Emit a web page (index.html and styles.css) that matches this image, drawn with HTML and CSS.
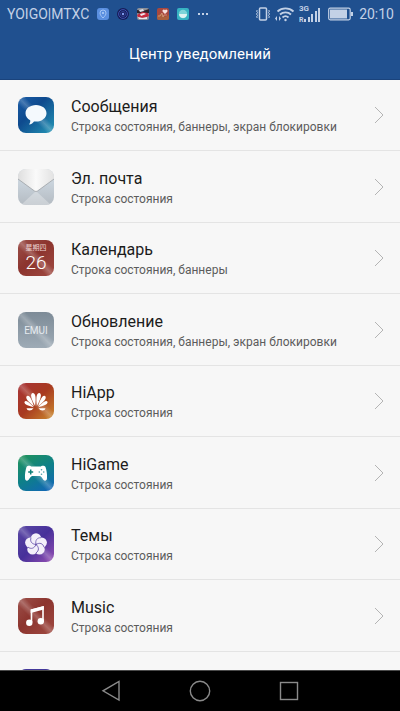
FILE: index.html
```html
<!DOCTYPE html>
<html lang="ru">

<head>
    <meta charset="UTF-8">
    <meta name="viewport" content="width=device-width, initial-scale=1.0">
    <title>Центр уведомлений</title>
    <link rel="stylesheet" href="styles.css">
</head>

<body>
    <header class="top">
        <div class="status">
            <span class="carrier">YOIGO|MTXC</span>
            <div class="tray">
                <svg width="12" height="12" viewBox="0 0 12 12">
                    <rect width="12" height="12" rx="3" fill="#5a8fe0"/>
                    <path d="M6 10C4 8 3 6.500 3 5a3 3 0 0 1 6 0c0 1.500-1 3-3 5z" fill="none" stroke="#b5d2fa" stroke-width=".8"/>
                    <circle cx="6" cy="5" r="1" fill="#b5d2fa"/>
                </svg>
                <svg width="12" height="12" viewBox="0 0 12 12">
                    <circle cx="6" cy="6" r="6" fill="#161c58"/>
                    <circle cx="6" cy="6" r="4.400" fill="none" stroke="#4258b8" stroke-width=".9"/>
                    <circle cx="6" cy="6" r="2.600" fill="none" stroke="#3446a0" stroke-width=".8"/>
                    <circle cx="6" cy="6" r="1.200" fill="#7f9cf0"/>
                </svg>
                <svg width="12" height="12" viewBox="0 0 12 12">
                    <rect width="12" height="12" rx="2" fill="#8c8f98"/>
                    <path d="M0 2l6 1 6-2v4L6 6 0 5z" fill="#30242c"/>
                    <path d="M2 2l4-1 1 2-4 1z" fill="#dfe2e8"/>
                    <path d="M0 7l5-3 6 1 1 3-5 2-6-1z" fill="#c8283c"/>
                    <path d="M3 6l4-1 2 1-5 2zM1 9l4 1 5-1v2H2z" fill="#eee8ec"/>
                </svg>
                <svg width="12" height="12" viewBox="0 0 12 12">
                    <rect width="12" height="12" rx="2" fill="#a8483e"/>
                    <path d="M0 8l5-3 3 4 4-2v3a2 2 0 0 1-2 2H2a2 2 0 0 1-2-2z" fill="#a9603c"/>
                    <path d="M1 8h2l2-3 1 4 1-2h3" fill="none" stroke="#e0a486" stroke-width=".7"/>
                    <path d="M8 6L5.700 3.700a1.200 1.200 0 0 1 2.300-1.400 1.200 1.200 0 0 1 2.300 1.400z" fill="#f6dfdc"/>
                </svg>
                <svg width="12" height="12" viewBox="0 0 12 12">
                    <rect width="12" height="12" rx="2" fill="#36b3c2"/>
                    <circle cx="6" cy="6" r="4.200" fill="#7ed4d8"/>
                    <path d="M2 6h8c0 2.500-2 4-4 4S2 8.500 2 6z" fill="#dff4f2"/>
                </svg>
                <svg width="12" height="12" viewBox="0 0 12 12" fill="#c3d1e6">
                    <rect x="1" y="5" width="2" height="2"/>
                    <rect x="5" y="5" width="2" height="2"/>
                    <rect x="9" y="5" width="2" height="2"/>
                </svg>
            </div>
            <div class="signals">
                <svg width="16" height="14" viewBox="0 0 16 14" fill="none" stroke="#c3d1e6">
                    <rect x="4.500" y="1" width="7" height="12" rx="1" stroke-width="1.500"/>
                    <path d="M2.500 3l-1 1 1 1.500-1 1.500 1 1.500-1 1.500 1 1M13.500 3l1 1-1 1.500 1 1.500-1 1.500 1 1.500-1 1"/>
                </svg>
                <svg width="20" height="16" viewBox="0 0 20 16" fill="none" stroke="#c3d1e6" stroke-width="1.800">
                    <path d="M2.500 5.500a12 12 0 0 1 16 0M5 8.500a8 8 0 0 1 11 0M7.500 11.500a4.500 4.500 0 0 1 6 0"/>
                    <circle cx="10.500" cy="14" r="1.200" fill="#c3d1e6" stroke="none"/>
                    <path d="M0 12.500L2 10v5zM6 12.500L4 10v5z" fill="#c3d1e6" stroke="none"/>
                </svg>
                <svg class="cell" width="22" height="18" viewBox="0 0 22 18" fill="#c3d1e6">
                    <text x="0" y="6" font-size="8">3G</text>
                    <text x="0" y="17" font-size="7">R</text>
                    <rect x="5" y="14" width="2" height="3"/>
                    <rect x="9" y="12" width="2" height="5"/>
                    <rect x="12" y="9" width="2" height="8"/>
                    <rect x="16" y="6" width="2" height="11"/>
                    <rect x="19" y="3" width="2" height="14"/>
                </svg>
                <svg class="battery" width="25" height="14" viewBox="0 0 25 14">
                    <rect x=".7" y="1.200" width="21.500" height="11.600" rx="1.500" fill="none" stroke="#c3d1e6" stroke-width="1.200"/>
                    <rect x="2" y="2.500" width="17" height="9" fill="#c3d1e6"/>
                    <path d="M23 5h2v4h-2z" fill="#c3d1e6"/>
                </svg>
                <span class="time">20:10</span>
            </div>
        </div>
        <h1>Центр уведомлений</h1>
    </header>

    <main class="list">
        <a class="row" href="#">
            <svg class="icon" viewBox="0 0 36 36">
                <defs>
                    <linearGradient id="blue" x1="0" y1="0" x2="1" y2="1">
                        <stop offset="0" stop-color="#1a5ca6"/>
                        <stop offset=".4" stop-color="#0e4a8e"/>
                        <stop offset="1" stop-color="#2496b6"/>
                    </linearGradient>
                    <linearGradient id="shine" x1="0" y1="1" x2="1" y2="0">
                        <stop offset=".4" stop-color="#fff" stop-opacity="0"/>
                        <stop offset=".5" stop-color="#fff" stop-opacity=".22"/>
                        <stop offset=".6" stop-color="#fff" stop-opacity="0"/>
                    </linearGradient>
                </defs>
                <rect width="36" height="36" rx="8" fill="url(#blue)"/>
                <rect width="36" height="36" rx="8" fill="url(#shine)"/>
                <path d="M18 8c6 0 10.500 3.600 10.500 8.200S24 24.500 18 24.500l-2-.1c-1 1.500-2.500 2.700-5 3.100 1-1.200 1.400-2.600 1.200-4.200C9.300 21.800 7.500 19.200 7.500 16.200 7.500 11.600 12 8 18 8z" fill="#f4f9fd"/>
            </svg>
            <span class="info">
                <span class="name">Сообщения</span>
                <span class="desc">Строка состояния, баннеры, экран блокировки</span>
            </span>
            <svg class="arrow" viewBox="0 0 10 18"><path d="M1 1l8 8-8 8"/></svg>
        </a>
        <a class="row" href="#">
            <svg class="icon" viewBox="0 0 36 36">
                <defs>
                    <linearGradient id="paper" x1="0" y1="0" x2="0" y2="1">
                        <stop offset=".3" stop-color="#ccd6df"/>
                        <stop offset="1" stop-color="#b4bbc2"/>
                    </linearGradient>
                    <linearGradient id="flap" x1="0" y1="0" x2="1" y2="0">
                        <stop offset="0" stop-color="#dedede"/>
                        <stop offset=".5" stop-color="#fafafa"/>
                        <stop offset="1" stop-color="#e2e2e2"/>
                    </linearGradient>
                </defs>
                <rect width="36" height="36" rx="8" fill="url(#paper)"/>
                <path d="M4 35l14-13 14 13-4 1H8z" fill="#fff" opacity=".3"/>
                <path d="M0 10V8a8 8 0 0 1 8-8h20a8 8 0 0 1 8 8v2L19.500 22q-1.500 1-3 0z" fill="url(#flap)"/>
                <path d="M0 10l16.500 12q1.500 1 3 0L36 10" fill="none" stroke="#9da2a6" stroke-width=".8"/>
            </svg>
            <span class="info">
                <span class="name">Эл. почта</span>
                <span class="desc">Строка состояния</span>
            </span>
            <svg class="arrow" viewBox="0 0 10 18"><path d="M1 1l8 8-8 8"/></svg>
        </a>
        <a class="row" href="#">
            <svg class="icon" viewBox="0 0 36 36">
                <defs>
                    <linearGradient id="brick" x1="0" y1="0" x2="1" y2="1">
                        <stop offset="0" stop-color="#9c504a"/>
                        <stop offset=".45" stop-color="#8c342e"/>
                        <stop offset="1" stop-color="#a04a42"/>
                    </linearGradient>
                </defs>
                <rect width="36" height="36" rx="8" fill="url(#brick)"/>
                <rect width="36" height="36" rx="8" fill="url(#shine)"/>
                <text class="weekday" x="18" y="10" text-anchor="middle">星期四</text>
                <text class="day" x="18" y="29" text-anchor="middle">26</text>
            </svg>
            <span class="info">
                <span class="name">Календарь</span>
                <span class="desc">Строка состояния, баннеры</span>
            </span>
            <svg class="arrow" viewBox="0 0 10 18"><path d="M1 1l8 8-8 8"/></svg>
        </a>
        <a class="row" href="#">
            <svg class="icon" viewBox="0 0 36 36">
                <defs>
                    <linearGradient id="steel" x1="0" y1="0" x2="0" y2="1">
                        <stop offset="0" stop-color="#7d8b97"/>
                        <stop offset="1" stop-color="#9eabb6"/>
                    </linearGradient>
                </defs>
                <rect width="36" height="36" rx="8" fill="url(#steel)"/>
                <rect width="36" height="36" rx="8" fill="url(#shine)"/>
                <text class="emui" x="18" y="22" text-anchor="middle">EMUI</text>
            </svg>
            <span class="info">
                <span class="name">Обновление</span>
                <span class="desc">Строка состояния, баннеры, экран блокировки</span>
            </span>
            <svg class="arrow" viewBox="0 0 10 18"><path d="M1 1l8 8-8 8"/></svg>
        </a>
        <a class="row" href="#">
            <svg class="icon" viewBox="0 0 36 36">
                <defs>
                    <linearGradient id="fire" x1="0" y1="0" x2="1" y2="1">
                        <stop offset="0" stop-color="#a83438"/>
                        <stop offset=".5" stop-color="#a83a20"/>
                        <stop offset="1" stop-color="#cc8a2e"/>
                    </linearGradient>
                    <path id="petal" d="M0-2C-1.200-6-2.400-10-2-13q.5-2.200 2-2.200T2-13C2.400-10 1.200-6 0-2z"/>
                </defs>
                <rect width="36" height="36" rx="8" fill="url(#fire)"/>
                <rect width="36" height="36" rx="8" fill="url(#shine)"/>
                <g fill="#fff" transform="translate(18 25)">
                    <use href="#petal" transform="translate(-.5 0) rotate(-11)"/>
                    <use href="#petal" transform="translate(.5 0) rotate(11)"/>
                    <use href="#petal" transform="translate(-1 0) rotate(-34) scale(.95)"/>
                    <use href="#petal" transform="translate(1 0) rotate(34) scale(.95)"/>
                    <use href="#petal" transform="translate(-1 0) rotate(-59) scale(.8)"/>
                    <use href="#petal" transform="translate(1 0) rotate(59) scale(.8)"/>
                    <path d="M-2.500.3h-7q.5 2.200 3 2.200t4-2.200zM2.500.3h7q-.5 2.200-3 2.200t-4-2.200z"/>
                </g>
            </svg>
            <span class="info">
                <span class="name">HiApp</span>
                <span class="desc">Строка состояния</span>
            </span>
            <svg class="arrow" viewBox="0 0 10 18"><path d="M1 1l8 8-8 8"/></svg>
        </a>
        <a class="row" href="#">
            <svg class="icon" viewBox="0 0 36 36">
                <defs>
                    <linearGradient id="sea" x1=".2" y1="0" x2=".8" y2="1">
                        <stop offset="0" stop-color="#1f9160"/>
                        <stop offset=".5" stop-color="#0e8088"/>
                        <stop offset="1" stop-color="#1268b4"/>
                    </linearGradient>
                </defs>
                <rect width="36" height="36" rx="8" fill="url(#sea)"/>
                <rect width="36" height="36" rx="8" fill="url(#shine)"/>
                <path d="M13 11.500h10c0-1 4-1 4.500.5 1 3 1.800 7 1.500 11 0 2-.8 2.700-2 2.700-2 0-3-4-5-4.700h-8c-2 .7-3 4.700-5 4.700-1.200 0-2-.7-2-2.700-.3-4 .5-8 1.500-11 .5-1.500 4.500-1.500 4.500-.5z" fill="#fff"/>
                <path d="M12.700 14.500v5M10.200 17h5" stroke="#0e8078" stroke-width="1.500"/>
                <g fill="#4b9fa8">
                    <circle cx="23.500" cy="14.800" r=".8"/>
                    <circle cx="23.500" cy="19.200" r=".8"/>
                    <circle cx="21.300" cy="17" r=".8"/>
                    <circle cx="25.700" cy="17" r=".8"/>
                </g>
            </svg>
            <span class="info">
                <span class="name">HiGame</span>
                <span class="desc">Строка состояния</span>
            </span>
            <svg class="arrow" viewBox="0 0 10 18"><path d="M1 1l8 8-8 8"/></svg>
        </a>
        <a class="row" href="#">
            <svg class="icon" viewBox="0 0 36 36">
                <defs>
                    <linearGradient id="violet" x1="0" y1="0" x2="1" y2="1">
                        <stop offset="0" stop-color="#5a48a4"/>
                        <stop offset=".5" stop-color="#47309a"/>
                        <stop offset="1" stop-color="#9650b4"/>
                    </linearGradient>
                </defs>
                <rect width="36" height="36" rx="8" fill="url(#violet)"/>
                <rect width="36" height="36" rx="8" fill="url(#shine)"/>
                <g transform="translate(18 18.500)" fill="#f3effa">
                    <circle cx="0" cy="-6" r="5.200"/>
                    <circle cx="5.700" cy="-1.900" r="5.200"/>
                    <circle cx="3.500" cy="4.900" r="5.200"/>
                    <circle cx="-3.500" cy="4.900" r="5.200"/>
                    <circle cx="-5.700" cy="-1.900" r="5.200"/>
                    <g fill="none" stroke="#6a55ac" stroke-width=".8">
                        <path id="curl" d="M0 0C-1-4 1-7 5-6.800"/>
                        <use href="#curl" transform="rotate(72)"/>
                        <use href="#curl" transform="rotate(144)"/>
                        <use href="#curl" transform="rotate(216)"/>
                        <use href="#curl" transform="rotate(288)"/>
                    </g>
                </g>
            </svg>
            <span class="info">
                <span class="name">Темы</span>
                <span class="desc">Строка состояния</span>
            </span>
            <svg class="arrow" viewBox="0 0 10 18"><path d="M1 1l8 8-8 8"/></svg>
        </a>
        <a class="row" href="#">
            <svg class="icon" viewBox="0 0 36 36">
                <rect width="36" height="36" rx="8" fill="url(#brick)"/>
                <rect width="36" height="36" rx="8" fill="url(#shine)"/>
                <path d="M13.500 24.500V12l11.500-3v14.500" fill="none" stroke="#fff" stroke-width="1.600"/>
                <path d="M12.700 11.500L25.800 8v3.500L12.700 15z" fill="#fff"/>
                <circle cx="11.300" cy="24.800" r="3.200" fill="#fff"/>
                <circle cx="22.800" cy="23.200" r="3.200" fill="#fff"/>
            </svg>
            <span class="info">
                <span class="name">Music</span>
                <span class="desc">Строка состояния</span>
            </span>
            <svg class="arrow" viewBox="0 0 10 18"><path d="M1 1l8 8-8 8"/></svg>
        </a>
        <a class="row" href="#" aria-label="Далее">
            <svg class="icon" viewBox="0 0 36 36">
                <rect width="36" height="36" rx="8" fill="#43389a"/>
            </svg>
        </a>
    </main>

    <nav class="keys">
        <button type="button" aria-label="Назад">
            <svg viewBox="0 0 22 22"><path d="M19 1.500v18.500L3 10.800z"/></svg>
        </button>
        <button type="button" aria-label="Домой">
            <svg viewBox="0 0 22 22"><circle cx="11" cy="11" r="9.700"/></svg>
        </button>
        <button type="button" aria-label="Недавние">
            <svg viewBox="0 0 22 22"><rect x="2.500" y="2.500" width="17" height="17"/></svg>
        </button>
    </nav>
</body>

</html>
```
FILE: styles.css
```css
* {
    box-sizing: border-box;
}

body {
    margin: 0;
    height: 100vh;
    display: flex;
    flex-direction: column;
    background: #f7f7f7;
    font-family: Roboto, "Noto Sans CJK SC", sans-serif;
}

svg {
    display: block;
    flex: none;
}

.top {
    background: #20508f;
    border-bottom: 1px solid #1a437c;
}

.status {
    display: flex;
    align-items: center;
    height: 27px;
    padding: 0 6px 0 7px;
    color: #c3d1e6;
    font-size: 14px;
}

.tray {
    display: flex;
    gap: 8px;
    margin-left: 8px;
}

.signals {
    display: flex;
    align-items: center;
    gap: 4px;
    margin-left: auto;
}

.cell {
    font-weight: 700;
}

.battery {
    margin: 0 2px 0 3px;
}

h1 {
    margin: 0;
    padding-top: 2px;
    color: #fff;
    font-size: 15px;
    font-weight: 400;
    line-height: 50px;
    text-align: center;
}

.list {
    flex: 1;
    min-height: 0;
    overflow: hidden;
}

.row {
    display: flex;
    align-items: center;
    height: 71px;
    padding: 0 16px 0 18px;
    border-bottom: 1px solid #e4e4e4;
    color: #1c1c1c;
    text-decoration: none;
}

.row:nth-child(even) {
    height: 72px;
}

.icon {
    width: 36px;
    height: 36px;
}

.info {
    flex: 1;
    margin-left: 17px;
    padding-top: 3px;
}

.name,
.desc {
    display: block;
}

.name {
    font-size: 16px;
    line-height: 21px;
}

.desc {
    color: #5c5c5c;
    font-size: 12px;
    line-height: 20px;
}

.arrow {
    width: 10px;
    height: 18px;
    fill: none;
    stroke: #b4b4b4;
}

.weekday {
    fill: #ecd4d2;
    font-size: 7px;
}

.day {
    fill: #fff;
    font-size: 19px;
    font-weight: 300;
}

.emui {
    fill: #e6ebf0;
    font-size: 10px;
}

.keys {
    display: flex;
    justify-content: center;
    align-items: center;
    gap: 67px;
    height: 41px;
    background: #000;
    border-top: 1px solid #4a4a4a;
}

.keys button {
    padding: 0;
    border: 0;
    background: none;
}

.keys svg {
    width: 22px;
    height: 22px;
    fill: none;
    stroke: #8a8a8a;
    stroke-width: 1.4;
}
```
